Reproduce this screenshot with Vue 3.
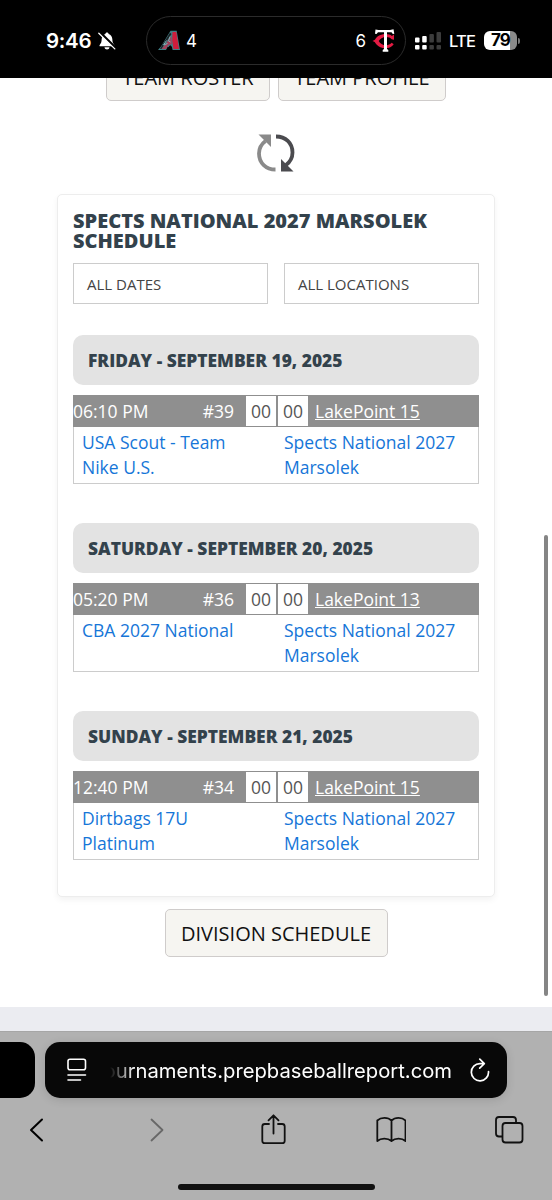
<!-- Team schedule page, shown in a mobile browser -->
<template>
  <div class="phone">
    <header class="status-bar">
      <div class="clock">
        <span class="time">9:46</span>
        <svg class="bell" viewBox="0 0 18 18">
          <path
            d="M9 .5c.9 0 1.5.6 1.6 1.4 2.300.8 3.600 2.700 3.700 5.200 0 3.200.9 4.600 2 5.800.5.600.2 1.300-.6 1.300H2.300c-.8 0-1.100-.7-.6-1.300 1.100-1.200 2-2.600 2-5.800.1-2.500 1.400-4.400 3.700-5.200C7.500 1.100 8.100.5 9 .5z"
            fill="#fff"
          />
          <path d="M6.500 15.300h5c-.2 1.400-1.200 2.200-2.500 2.200s-2.300-.8-2.500-2.200z" fill="#fff" />
          <path d="M1.600 0L18 16.400" stroke="#000" stroke-width="2.600" />
          <path d="M.8 1.200l16 15.700" stroke="#fff" stroke-width="1.300" stroke-linecap="round" />
        </svg>
      </div>
      <div class="island">
        <svg class="logo-a" viewBox="0 0 24 21">
          <path d="M13.500.8h6.200L23 20h-7.500l-.5-3h-4.500L9 20H1l3-3.500z" fill="#3f7f86" />
          <path d="M15.500 2h3.800l2.700 17h-5.500l-1.300-8.500z" fill="#cf1d3c" />
          <path d="M13 2.800L5 15.500 3 19h1.500L14.500 4z" fill="#1d2023" />
          <path d="M12.500 8l1.700-1.500.6 7.500-3.300 1L9 19H4.500l4-4.500z" fill="#a3405a" />
          <path d="M13 6.500l-1.500 4.500 2 1M9.500 10.500l-3 4.500 4-1.500" fill="none" stroke="#7fb0b5" stroke-width="1" />
          <path d="M10.700 20l1.300-3.800 1.300-1 1.300 1 .6 3.800z" fill="#000" />
        </svg>
        <span class="score">4</span>
        <span class="score away">6</span>
        <svg class="logo-tc" viewBox="0 0 24 25">
          <path
            d="M22 6.500v5.300l-2.300-.5c-1.300-1.500-3.200-2.300-5.700-2.300-3.500 0-5.900 1.700-7.300 4 1.400 2.600 3.800 4.200 7.300 4.200 2.400 0 4.300-.8 5.700-2.400l2 1.500c-1.800 2.700-4.600 4-8 4-5.300 0-9-2.700-11-6.300L.5 13l2.400-1.300C5 8.200 8.700 6 13.700 6c2.600 0 4.700.7 6.200 1.900z"
            fill="#e31b43"
          />
          <path
            d="M3.500 1.500l3 .5h11.500l3.500-.8.8 4.500-1.500.2-1.300-1.600H15V21l1.300 1v1.800h-5.600V22l1.300-1V4.300H6L4.500 6 3 5.700z"
            fill="#fff"
          />
        </svg>
      </div>
      <svg class="signal" viewBox="0 0 26 18">
        <g fill="#fff">
          <rect x="0" y="5.500" width="4.500" height="5" rx="1" />
          <rect x="7.200" y="4" width="4.500" height="6.500" rx="1" />
          <rect x="0" y="13" width="4.500" height="4.500" rx="1" />
          <rect x="7.200" y="13" width="4.500" height="4.500" rx="1" />
        </g>
        <g fill="#3c3c3c">
          <rect x="14.400" y="2" width="4.500" height="8.500" rx="1" />
          <rect x="21.500" y="0" width="4.500" height="10.500" rx="1" />
          <rect x="14.400" y="13" width="4.500" height="4.500" rx="1" />
          <rect x="21.500" y="13" width="4.500" height="4.500" rx="1" />
        </g>
      </svg>
      <span class="network">LTE</span>
      <span class="battery">79</span>
      <span class="battery-cap"></span>
    </header>

    <main class="viewport">
      <div class="top-buttons">
        <button class="btn roster">TEAM ROSTER</button>
        <button class="btn profile">TEAM PROFILE</button>
      </div>

      <svg class="refresh" viewBox="0 0 40 40">
        <path d="M19.500 36.500C10 36.500 3 30 3 20.500c0-5.500 2.500-9.500 6.500-12.500" fill="none" stroke="#8a8a8a" stroke-width="3.800" />
        <path d="M2.500 1.500h12.500V14z" fill="#8a8a8a" />
        <path d="M20 3.500C29.500 3.500 36.500 10 36.500 19.500c0 5.500-2.500 9.500-6.500 12.500" fill="none" stroke="#4b4b4f" stroke-width="3.800" />
        <path d="M25 26v12.500h12.500z" fill="#4b4b4f" />
      </svg>

      <section class="card">
        <h2 class="title">SPECTS NATIONAL 2027 MARSOLEK SCHEDULE</h2>
        <div class="filters">
          <div class="filter">ALL DATES</div>
          <div class="filter">ALL LOCATIONS</div>
        </div>

        <div v-for="game in games" :key="game.id" class="day">
          <h3 class="day-title">{{ game.date }}</h3>
          <div class="game">
            <div class="game-head">
              <span class="game-time">{{ game.time }}</span>
              <span class="game-id">#{{ game.id }}</span>
              <span class="points">00</span>
              <span class="points">00</span>
              <a class="field">{{ game.field }}</a>
            </div>
            <div class="teams">
              <a class="team">{{ game.away }}</a>
              <a class="team">{{ game.home }}</a>
            </div>
          </div>
        </div>
      </section>

      <button class="btn division">DIVISION SCHEDULE</button>
      <div class="page-footer"></div>
      <div class="scrollbar"></div>
    </main>

    <footer class="toolbar">
      <div class="tabs">
        <div class="prev-tab"></div>
        <div class="address">
          <svg class="reader" viewBox="0 0 20 24" fill="none" stroke="#fff" stroke-width="1.600" stroke-linecap="round">
            <rect x="1" y="1.300" width="17.500" height="10.400" rx="2" />
            <path d="M1 17h17.500M1 22h12.500" />
          </svg>
          <div class="url"><span>tournaments.prepbaseballreport.com</span></div>
          <svg class="reload" viewBox="0 0 20 24" fill="none" stroke="#fff" stroke-width="1.700" stroke-linecap="round" stroke-linejoin="round">
            <path d="M13.500 5.600H10A8.600 8.600 0 1 0 18.500 13.500M9.800 1.200l4.500 4.400-4.600 4.500" />
          </svg>
        </div>
      </div>
      <nav class="actions">
        <svg viewBox="0 0 30 32" fill="none" stroke="#000" stroke-width="2" stroke-linecap="round" stroke-linejoin="round">
          <path d="M21 5.500L10 16l11 10.500" />
        </svg>
        <svg viewBox="0 0 30 32" fill="none" stroke="#686868" stroke-width="1.800" stroke-linecap="round" stroke-linejoin="round">
          <path d="M12.500 5.500l11 10.500-11 10.500" />
        </svg>
        <svg viewBox="0 0 30 32" fill="none" stroke="#111" stroke-width="1.800" stroke-linecap="round" stroke-linejoin="round">
          <path d="M11 10H6.800c-1.600 0-2.500.9-2.500 2.500v14.200c0 1.600.9 2.500 2.500 2.500h17.400c1.600 0 2.500-.9 2.500-2.500V12.500c0-1.600-.9-2.500-2.500-2.500h-4.200M15.500 19.500V1.500M10.500 6.300l5-5 5 5" />
        </svg>
        <svg viewBox="0 0 30 32" fill="none" stroke="#111" stroke-width="1.800" stroke-linejoin="round">
          <path d="M15.500 6.500C12 3 5 3 1.300 6.500V27c3.500-3.200 10.500-3.200 14.200 0 3.700-3.200 10.500-3.200 14 0V6.500C26 3 19 3 15.500 6.500zM15.500 6.500V27" />
        </svg>
        <svg viewBox="0 0 30 32" fill="none" stroke="#111" stroke-width="1.800" stroke-linejoin="round">
          <rect x="8.500" y="9" width="20" height="19.500" rx="3" />
          <path d="M8.500 22.500H5c-2 0-3-1-3-3V6c0-2 1-3 3-3h14c2 0 3 1 3 3v3" />
        </svg>
      </nav>
      <div class="home-indicator"></div>
    </footer>
  </div>
</template>

<script setup>
const games = [
  {
    id: 39,
    date: 'FRIDAY - SEPTEMBER 19, 2025',
    time: '06:10 PM',
    field: 'LakePoint 15',
    away: 'USA Scout - Team Nike U.S.',
    home: 'Spects National 2027 Marsolek',
  },
  {
    id: 36,
    date: 'SATURDAY - SEPTEMBER 20, 2025',
    time: '05:20 PM',
    field: 'LakePoint 13',
    away: 'CBA 2027 National',
    home: 'Spects National 2027 Marsolek',
  },
  {
    id: 34,
    date: 'SUNDAY - SEPTEMBER 21, 2025',
    time: '12:40 PM',
    field: 'LakePoint 15',
    away: 'Dirtbags 17U Platinum',
    home: 'Spects National 2027 Marsolek',
  },
]
</script>

<style>
body {
  margin: 0;
  background: #fff;
}
</style>

<style scoped>
* {
  box-sizing: border-box;
}

.phone {
  display: flex;
  flex-direction: column;
  width: 552px;
  height: 1200px;
  overflow: hidden;
  font-family: 'Open Sans', sans-serif;
  background: #fff;
}

/* status bar */
.status-bar {
  display: flex;
  align-items: center;
  flex: none;
  height: 78px;
  padding: 3px 0 0 46px;
  color: #fff;
  font-family: Inter, sans-serif;
  background: #000;
}

.clock {
  display: flex;
  align-items: center;
  width: 100px;
}

.time {
  width: 52px;
  font-size: 20.5px;
  font-weight: 600;
  letter-spacing: -0.3px;
  white-space: nowrap;
}

.bell {
  width: 18px;
  height: 18px;
}

.island {
  display: flex;
  align-items: center;
  width: 260px;
  height: 49px;
  padding: 0 9px 0 10px;
  border: 1.5px solid #2b2b2b;
  border-radius: 25px;
}

.logo-a {
  width: 24px;
  height: 21px;
  margin-right: 5px;
}

.score {
  font-size: 17px;
}

.away {
  margin-left: auto;
}

.logo-tc {
  width: 24px;
  height: 25px;
  margin-left: 6px;
}

.signal {
  width: 26px;
  height: 18px;
  margin-left: 9px;
}

.network {
  width: 26px;
  margin-left: 8px;
  font-size: 16.5px;
  font-weight: 500;
  letter-spacing: -0.8px;
}

.battery {
  width: 33px;
  height: 19px;
  margin-left: 9px;
  border-radius: 6px;
  color: #000;
  font-size: 17px;
  font-weight: 700;
  letter-spacing: -0.8px;
  line-height: 19px;
  text-align: center;
  background: linear-gradient(to right, #fff 79%, #8a8a8a 79%);
}

.battery-cap {
  width: 2px;
  height: 6px;
  margin-left: 1px;
  border-radius: 0 2px 2px 0;
  background: #777;
}

/* page */
.viewport {
  position: relative;
  display: flex;
  flex-direction: column;
  align-items: center;
  height: 953px;
  overflow: hidden;
}

.btn {
  flex: none;
  height: 48px;
  padding: 0;
  border: 1.5px solid #cfcccb;
  border-radius: 5px;
  color: #111;
  font-family: inherit;
  font-size: 20px;
  white-space: nowrap;
  background: #f6f5f1;
}

.top-buttons {
  display: flex;
  flex: none;
  gap: 8px;
  margin-top: -25px;
}

.roster {
  width: 164px;
}

.profile {
  width: 168px;
}

.refresh {
  flex: none;
  width: 40px;
  height: 40px;
  margin: 32px 0 21px;
}

.card {
  flex: none;
  width: 438px;
  height: 703px;
  padding: 16px 15px;
  border: 1px solid #ededed;
  border-radius: 5px;
  background: #fff;
  box-shadow: 0 3px 6px rgba(0, 0, 0, 0.05);
}

.title {
  margin: 0;
  color: #33424c;
  font-size: 20px;
  font-weight: 800;
  line-height: 20px;
}

.filters {
  display: flex;
  gap: 16px;
  margin-top: 12px;
}

.filter {
  flex: 1;
  height: 41px;
  padding-left: 13px;
  border: 1px solid #ccc;
  color: #444;
  font-size: 15px;
  font-weight: 500;
  line-height: 40px;
}

.day {
  height: 188px;
}

.filters + .day {
  margin-top: 31px;
}

.day-title {
  height: 50px;
  margin: 0 0 10px;
  padding-left: 15px;
  border-radius: 10px;
  color: #33424c;
  font-size: 17.4px;
  font-weight: 800;
  line-height: 50px;
  background: #e3e3e3;
}

.game {
  height: 89px;
  border: 1px solid #ccc;
  border-top: 0;
  font-size: 17.5px;
}

.game-head {
  display: flex;
  align-items: center;
  height: 32px;
  margin: 0 -1px;
  color: #fff;
  background: #8f8f8f;
}

.game-time {
  width: 100px;
}

.game-id {
  width: 61px;
  margin-right: 12px;
  text-align: right;
}

.points {
  width: 30px;
  height: 30px;
  margin-right: 2px;
  color: #555;
  line-height: 30px;
  text-align: center;
  background: #fff;
}

.field {
  margin-left: 5px;
  text-decoration: underline;
}

.teams {
  display: flex;
  padding: 3px 0 3px 8px;
  line-height: 25px;
}

.team {
  flex: none;
  width: 194px;
  padding-right: 24px;
  color: #1676d8;
}

.team:first-child {
  width: 202px;
}

.team + .team {
  padding-right: 16px;
}

.division {
  width: 223px;
  margin-top: 12px;
}

.page-footer {
  flex: none;
  width: 100%;
  height: 24px;
  margin-top: auto;
  background: #ebecf1;
}

.scrollbar {
  position: absolute;
  top: 457px;
  right: 4px;
  width: 4px;
  height: 461px;
  border-radius: 2px;
  background: #858585;
}

/* browser toolbar */
.toolbar {
  flex: none;
  height: 169px;
  border-top: 1px solid #a6a6a6;
  background: #b1b1b1;
}

.tabs {
  display: flex;
  gap: 10px;
  padding-top: 10px;
}

.prev-tab {
  width: 35px;
  height: 56px;
  border-radius: 0 15px 15px 0;
  background: #000;
}

.address {
  display: flex;
  align-items: center;
  width: 462px;
  height: 56px;
  padding: 0 17px 0 22px;
  border-radius: 15px;
  background: #080808;
  box-shadow: 0 2px 10px rgba(0, 0, 0, 0.12);
}

.reader {
  width: 20px;
  height: 24px;
}

.url {
  display: flex;
  justify-content: flex-end;
  width: 342px;
  margin-left: 23px;
  overflow: hidden;
  color: #fff;
  font-family: Inter, sans-serif;
  font-size: 20.2px;
  white-space: nowrap;
  mask-image: linear-gradient(to right, transparent, #000 24px);
}

.reload {
  width: 20px;
  height: 24px;
  margin-left: 18px;
}

.actions {
  display: flex;
  justify-content: space-between;
  padding: 16px 28px 0 21px;
}

.actions svg {
  width: 30px;
  height: 32px;
}

.home-indicator {
  width: 197px;
  height: 6px;
  margin: 38px auto 0;
  border-radius: 3px;
  background: #111;
}
</style>
